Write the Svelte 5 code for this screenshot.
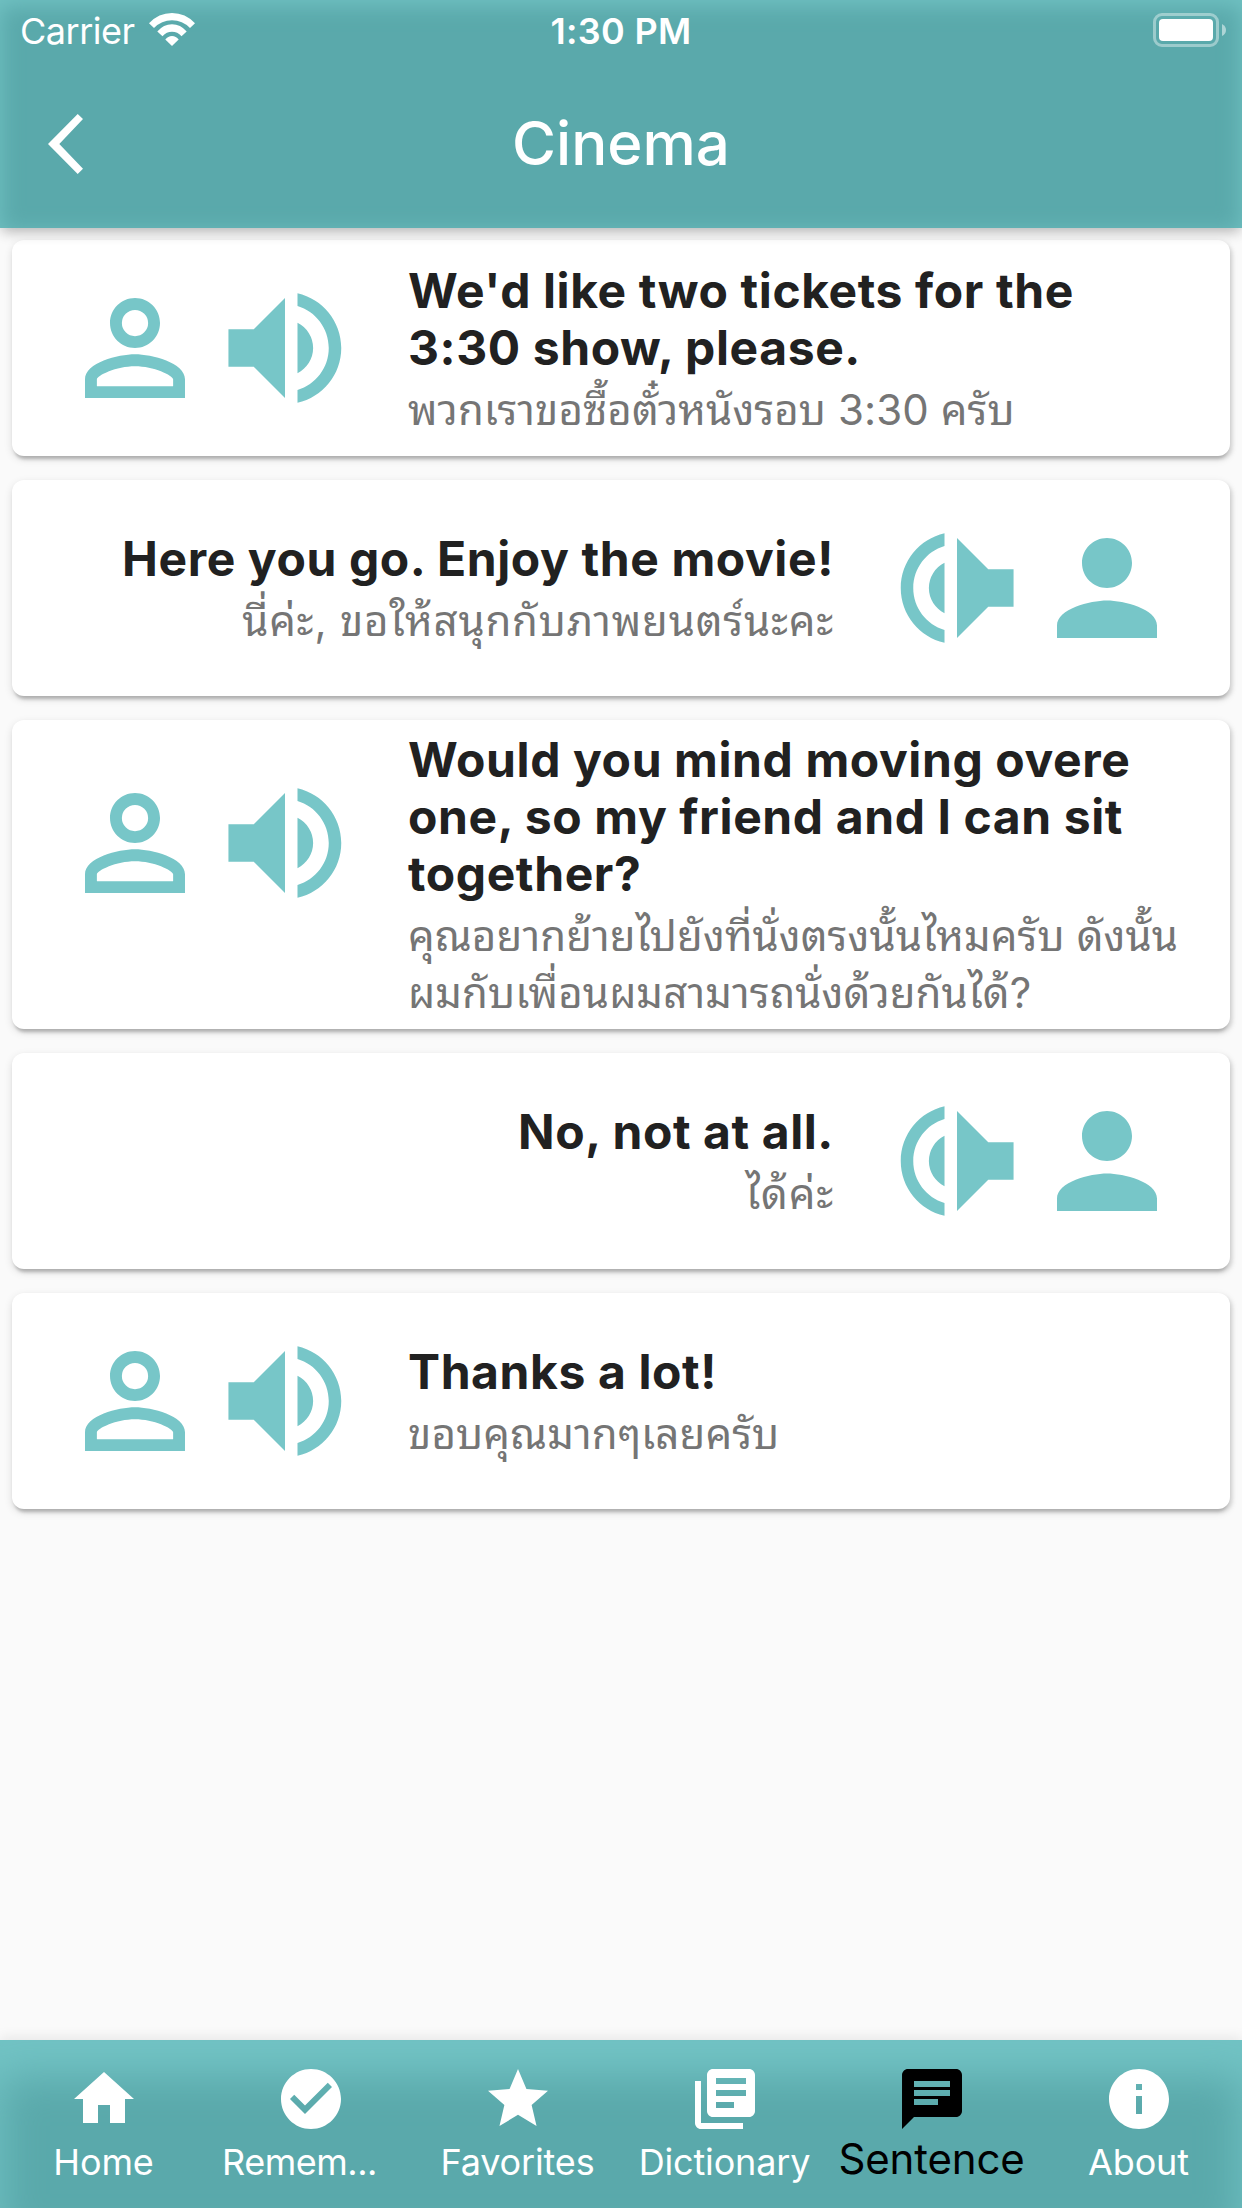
<script>
  const icons = {
    personOutline: "M12 5.9a2.1 2.1 0 1 1 0 4.2 2.1 2.1 0 0 1 0-4.2m0 9c2.97 0 6.1 1.46 6.1 2.1v1.1H5.9V17c0-.64 3.13-2.1 6.1-2.1M12 4C9.79 4 8 5.79 8 8s1.79 4 4 4 4-1.79 4-4-1.79-4-4-4zm0 9c-2.67 0-8 1.34-8 4v3h16v-3c0-2.66-5.33-4-8-4z",
    person: "M12 12c2.21 0 4-1.79 4-4s-1.79-4-4-4-4 1.79-4 4 1.79 4 4 4zm0 2c-2.67 0-8 1.34-8 4v2h16v-2c0-2.66-5.33-4-8-4z",
    volume: "M2.95 9v6H7l5 5V4L7 9H2.95zm13.55 3A4.5 4.5 0 0 0 14 7.97v8.05c1.48-.73 2.5-2.25 2.5-4.02zM14 3.23v2.06c2.89.86 5 3.54 5 6.71s-2.11 5.85-5 6.71v2.06c4.01-.91 7-4.49 7-8.77s-2.99-7.86-7-8.77z",
    home: "M10 20v-6h4v6h5v-8h3L12 3 2 12h3v8z",
    check: "M12 2C6.48 2 2 6.48 2 12s4.48 10 10 10 10-4.48 10-10S17.52 2 12 2zm-2 15l-5-5 1.41-1.41L10 14.17l7.59-7.59L19 8l-9 9z",
    star: "M12 17.27L18.18 21l-1.64-7.03L22 9.24l-7.19-.61L12 2 9.19 8.63 2 9.24l5.46 4.73L5.82 21z",
    books: "M4 6H2v14c0 1.1.9 2 2 2h14v-2H4V6zm16-4H8c-1.1 0-2 .9-2 2v12c0 1.1.9 2 2 2h12c1.1 0 2-.9 2-2V4c0-1.1-.9-2-2-2zm-1 9H9V9h10v2zm-4 4H9v-2h6v2zm4-8H9V5h10v2z",
    chat: "M20 2H4c-1.1 0-1.99.9-1.99 2L2 22l4-4h14c1.1 0 2-.9 2-2V4c0-1.1-.9-2-2-2zM6 9h12v2H6V9zm8 5H6v-2h8v2zm4-6H6V6h12v2z",
    info: "M12 2C6.48 2 2 6.48 2 12s4.48 10 10 10 10-4.48 10-10S17.52 2 12 2zm1 15h-2v-6h2v6zm0-8h-2V7h2v2z"
  };

  const sentences = [
    { lines: ["We'd like two tickets for the", "3:30 show, please."], thai: ["พวกเราขอซื้อตั๋วหนังรอบ 3:30 ครับ"] },
    { lines: ["Here you go. Enjoy the movie!"], thai: ["นี่ค่ะ, ขอให้สนุกกับภาพยนตร์นะคะ"], reply: true },
    {
      lines: ["Would you mind moving overe", "one, so my friend and I can sit", "together?"],
      thai: ["คุณอยากย้ายไปยังที่นั่งตรงนั้นไหมครับ ดังนั้น", "ผมกับเพื่อนผมสามารถนั่งด้วยกันได้?"]
    },
    { lines: ["No, not at all."], thai: ["ได้ค่ะ"], reply: true },
    { lines: ["Thanks a lot!"], thai: ["ขอบคุณมากๆเลยครับ"] }
  ];

  const tabs = [
    { label: "Home", icon: icons.home },
    { label: "Remem...", icon: icons.check, clipped: true },
    { label: "Favorites", icon: icons.star },
    { label: "Dictionary", icon: icons.books },
    { label: "Sentence", icon: icons.chat },
    { label: "About", icon: icons.info }
  ];

  let active = $state("Sentence");
</script>

<div class="screen">
  <header>
    <div class="status">
      <div class="carrier">
        <span>Carrier</span>
        <svg class="wifi" viewBox="0 0 46 33">
          <path d="M0 10.300Q9.500 0 23 0T46 10.300L41 15Q33.500 7.200 23 7.200T5 15Z" />
          <path d="M8.300 18.500Q14.500 11.200 23 11.200T37.700 18.500L32.500 23.200Q28.500 18.800 23 18.800T13.500 23.200Z" />
          <path d="M16.300 26.500Q19 23 23 23T29.700 26.500L23 33Z" />
        </svg>
      </div>
      <span class="time">1:30 PM</span>
      <svg class="battery" viewBox="0 0 73 34">
        <rect x="1.500" y="1.500" width="63" height="31" rx="7.500" />
        <rect class="level" x="6" y="6" width="54" height="22" rx="4" />
        <path d="M69 11q4 2 4 6t-4 6z" />
      </svg>
    </div>
    <div class="bar">
      <button class="back" aria-label="Back">
        <svg viewBox="0 0 35 60"><path d="M29.700 0L35 5 11.300 30 35 54.700 29.700 60 0 30z" /></svg>
      </button>
      <h1>Cinema</h1>
    </div>
  </header>

  <main>
    {#each sentences as sentence}
      <article class="card" class:reply={sentence.reply}>
        <div class="icons">
          <svg viewBox="0 0 24 24"><path d={sentence.reply ? icons.person : icons.personOutline} /></svg>
          <svg class="volume" viewBox="0 0 24 24"><path d={icons.volume} /></svg>
        </div>
        <div class="text">
          {#each sentence.lines as line}
            <p class="title">{line}</p>
          {/each}
          <div class="thai">
            {#each sentence.thai as line}
              <p>{line}</p>
            {/each}
          </div>
        </div>
      </article>
    {/each}
  </main>

  <nav>
    {#each tabs as tab}
      <button
        class="tab"
        class:active={active === tab.label}
        class:clipped={tab.clipped}
        onclick={() => (active = tab.label)}>
        <svg viewBox="0 0 24 24"><path d={tab.icon} /></svg>
        <span>{tab.label}</span>
      </button>
    {/each}
  </nav>
</div>

<style>
  :global(body) {
    margin: 0;
  }

  .screen {
    width: 1242px;
    height: 2208px;
    display: flex;
    flex-direction: column;
    overflow: hidden;
    background: #fafafa;
    font-family: Inter, Thonburi, "Noto Sans Thai Looped", Loma, "Noto Sans Thai", "Liberation Sans", sans-serif;
  }

  h1,
  p {
    margin: 0;
    font-size: inherit;
    white-space: nowrap;
  }

  svg {
    display: block;
    flex: none;
    fill: currentColor;
  }

  button {
    border: 0;
    padding: 0;
    background: none;
    color: inherit;
    font: inherit;
  }

  header {
    height: 228px;
    flex: none;
    position: relative;
    z-index: 1;
    color: #fff;
    background: #5aa9ab;
    box-shadow:
      inset 0 5px 22px #72c3c4,
      0 6px 12px -3px rgba(0, 0, 0, 0.2),
      0 3px 15px rgba(0, 0, 0, 0.12);
  }

  .status {
    height: 60px;
    display: grid;
    grid-template-columns: 1fr auto 1fr;
    align-items: center;
    padding: 0 16px 0 20px;
    font-size: 36px;
  }

  .carrier {
    display: flex;
    align-items: center;
    gap: 14px;
    margin-top: 2px;
    letter-spacing: -0.5px;
  }

  .wifi {
    width: 46px;
    height: 33px;
    margin-top: -4px;
  }

  .time {
    margin: 2px 4px 0 0;
    font-weight: 600;
    letter-spacing: 0.3px;
  }

  .battery {
    justify-self: end;
    width: 73px;
    height: 34px;
    fill: rgba(255, 255, 255, 0.5);
  }

  .battery rect:first-child {
    fill: none;
    stroke: rgba(255, 255, 255, 0.4);
    stroke-width: 3;
  }

  .battery .level {
    fill: #fff;
  }

  .bar {
    height: 168px;
    display: grid;
    grid-template-columns: 1fr auto 1fr;
    align-items: center;
  }

  .back {
    margin-left: 48px;
  }

  .back svg {
    width: 35px;
    height: 60px;
  }

  h1 {
    margin-top: -2px;
    font-size: 60px;
    font-weight: 500;
    line-height: 72px;
  }

  main {
    flex: 1;
    display: flex;
    flex-direction: column;
    gap: 24px;
    padding: 12px;
  }

  .card {
    box-sizing: border-box;
    min-height: 216px;
    display: flex;
    align-items: center;
    gap: 48px;
    padding: 12px 48px;
    border-radius: 12px;
    background: #fff;
    box-shadow:
      0 6px 3px -3px rgba(0, 0, 0, 0.13),
      2px 3px 4px rgba(0, 0, 0, 0.13),
      0 3px 9px rgba(0, 0, 0, 0.12);
  }

  .card:nth-child(3) {
    height: 309px;
  }

  .card:nth-child(3) .icons {
    margin-top: -63px;
  }

  .reply,
  .reply .icons {
    flex-direction: row-reverse;
  }

  .icons {
    display: flex;
    color: #77c6c8;
  }

  .icons svg {
    width: 150px;
    height: 150px;
  }

  .reply .volume {
    transform: scaleX(-1);
  }

  .text {
    flex: 1;
    min-width: 0;
    padding-top: 3px;
  }

  .reply .text {
    padding-top: 2px;
    text-align: right;
  }

  .title {
    color: #212121;
    font-size: 48px;
    font-weight: 650;
    line-height: 57px;
    letter-spacing: 0.6px;
  }

  .thai {
    padding-top: 5px;
    color: #757575;
    font-size: 42px;
    line-height: 57px;
    letter-spacing: 0.1px;
  }

  .reply .thai {
    letter-spacing: 0.8px;
  }

  nav {
    height: 168px;
    flex: none;
    display: grid;
    grid-template-columns: repeat(6, 1fr);
    color: #fff;
    background: #5aa9ab;
    box-shadow:
      inset 0 36px 42px #72c3c4,
      0 -3px 12px rgba(0, 0, 0, 0.08);
    clip-path: inset(-20px 0 0);
  }

  .tab {
    display: flex;
    flex-direction: column;
    align-items: center;
    padding-top: 23px;
    font-size: 36px;
    line-height: 44px;
    letter-spacing: -0.15px;
  }

  .tab svg {
    width: 72px;
    height: 72px;
  }

  .tab span {
    margin-top: 5px;
  }

  .clipped span {
    margin-right: 22px;
    letter-spacing: -0.5px;
  }

  .active {
    color: #000;
    font-size: 42px;
  }

  .active span {
    margin-top: 2px;
  }
</style>
